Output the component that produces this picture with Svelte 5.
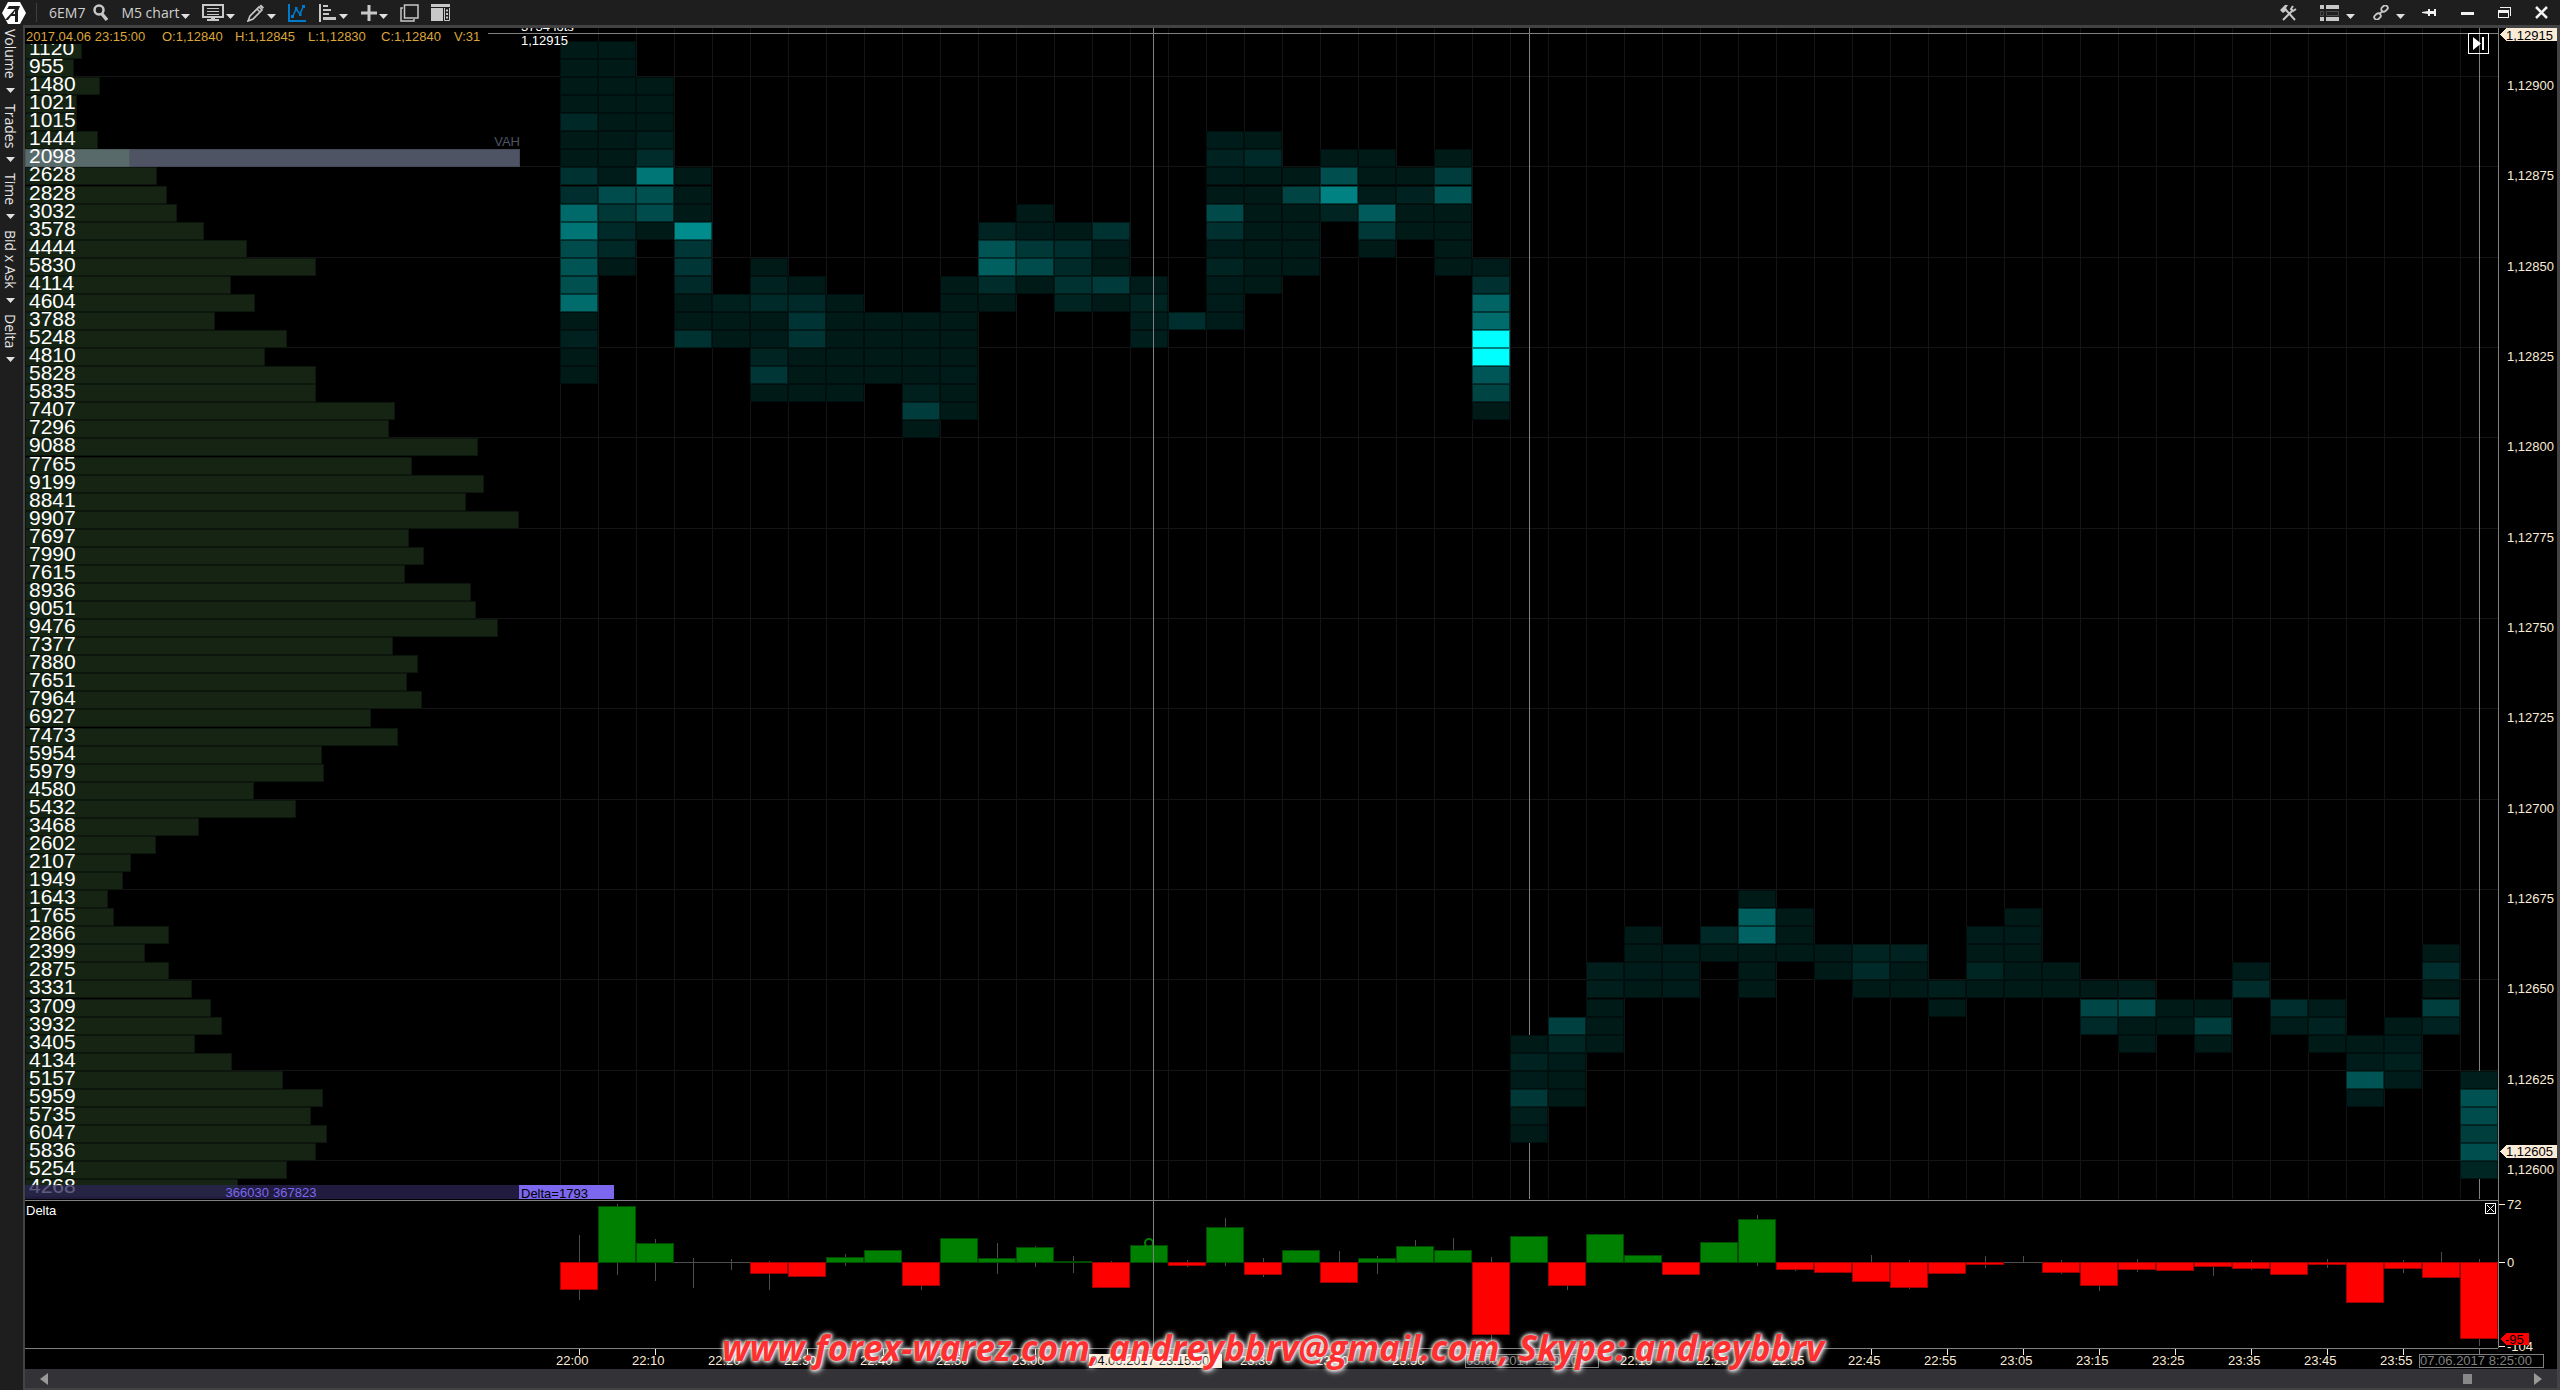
<script>
  let width = $state(0);
  let height = $state(0);
  let scroll = $state(976);

  const COL = 38;
  const TICK = 18.067;
  const TOP_PRICE = 12910;
  const DELTA_SCALE = 0.805;
  const VOL_SCALE = 0.04977;

  const menus = ["Volume", "Trades", "Time", "Bid x Ask", "Delta"];

  const ohlc = [
    { x: 1, text: "2017.04.06 23:15:00" },
    { x: 137, text: "O:1,12840" },
    { x: 210, text: "H:1,12845" },
    { x: 283, text: "L:1,12830" },
    { x: 356, text: "C:1,12840" },
    { x: 429, text: "V:31" },
  ];

  // traded volume per price row, top row first
  const volumes = [
    1120, 955, 1480, 1021, 1015, 1444, 2098, 2628, 2828, 3032, 3578, 4444, 5830, 4114, 4604, 3788,
    5248, 4810, 5828, 5835, 7407, 7296, 9088, 7765, 9199, 8841, 9907, 7697, 7990, 7615, 8936, 9051,
    9476, 7377, 7880, 7651, 7964, 6927, 7473, 5954, 5979, 4580, 5432, 3468, 2602, 2107, 1949, 1643,
    1765, 2866, 2399, 2875, 3331, 3709, 3932, 3405, 4134, 5157, 5959, 5735, 6047, 5836, 5254, 4268,
  ];
  const VAH_ROW = 6;

  // one entry per candle: [first row, intensity of each cluster cell]
  const clusters = [
    [0, [26, 26, 26, 26, 40, 26, 26, 50, 46, 105, 117, 75, 84, 80, 108, 26, 33, 26, 26]],
    [0, [26, 26, 26, 26, 26, 26, 26, 28, 75, 55, 42, 40, 26]],
    [2, [26, 26, 26, 32, 44, 118, 80, 76, 26]],
    [7, [26, 26, 26, 140, 54, 54, 42, 26, 26, 50]],
    [14, [32, 26, 26]],
    [12, [26, 34, 42, 26, 28, 36, 54, 26]],
    [13, [26, 42, 52, 52, 26, 26, 26]],
    [14, [26, 26, 26, 26, 26, 26]],
    [15, [26, 26, 26, 26]],
    [15, [26, 26, 26, 26, 32, 60, 26]],
    [13, [26, 26, 26, 26, 26, 28, 26, 26]],
    [10, [36, 84, 95, 44, 26]],
    [9, [26, 28, 56, 76, 26]],
    [10, [26, 46, 42, 50, 36]],
    [10, [50, 28, 26, 58, 26]],
    [13, [28, 36, 30, 30]],
    [15, [46]],
    [5, [28, 34, 28, 26, 74, 48, 28, 36, 28, 28, 28]],
    [5, [26, 42, 26, 26, 26, 26, 26, 26, 26]],
    [7, [26, 68, 26, 26, 26, 26]],
    [6, [26, 78, 130, 36]],
    [6, [26, 26, 28, 92, 56, 26]],
    [7, [26, 34, 26, 26]],
    [6, [26, 60, 84, 26, 26, 26, 26]],
    [12, [28, 48, 100, 108, 255, 255, 86, 68, 26]],
    [55, [26, 34, 28, 56, 30, 26]],
    [54, [64, 38, 28, 26, 26]],
    [51, [30, 30, 26, 26, 26]],
    [49, [26, 26, 28, 26]],
    [50, [28, 28, 28]],
    [49, [40, 26]],
    [47, [26, 96, 98, 26, 26, 26]],
    [48, [26, 26, 26]],
    [50, [26, 26]],
    [50, [36, 42, 26]],
    [50, [34, 26, 26]],
    [52, [30, 26]],
    [49, [28, 26, 38, 26]],
    [48, [26, 28, 26, 26, 26]],
    [51, [26, 26]],
    [52, [26, 70, 42]],
    [52, [30, 74, 26, 26]],
    [53, [26, 26]],
    [53, [26, 60, 26]],
    [51, [28, 44]],
    [53, [46, 28]],
    [53, [28, 34, 26]],
    [55, [26, 28, 84, 28]],
    [54, [26, 28, 32, 28]],
    [50, [26, 46, 26, 62, 34]],
    [57, [30, 82, 76, 62, 78, 38]],
  ];

  // delta, high, low
  const deltas = [
    [-34, 33, -47], [70, 72, -15], [24, 28, -23], [0, 5, -31], [0, 4, -8], [-14, 1, -34],
    [-18, 0, -18], [6, 10, -4], [15, 15, 0], [-28, 0, -34], [30, 30, 0], [5, 24, -13],
    [19, 20, -5], [1, 7, -13], [-31, 1, -31], [21, 21, 0], [-4, 2, -6], [43, 55, -3],
    [-15, 5, -17], [15, 15, 0], [-25, 14, -25], [5, 7, -14], [20, 27, 0], [15, 30, 0],
    [-89, 6, -97], [32, 32, 0], [-29, 0, -33], [35, 35, 0], [9, 9, 0], [-15, 0, -15],
    [25, 25, 0], [53, 58, -4], [-9, 0, -10], [-12, 0, -12], [-23, 9, -23], [-31, 2, -33],
    [-14, 0, -14], [-3, 8, -6], [0, 8, 0], [-13, 3, -13], [-28, 0, -35], [-9, 4, -11],
    [-10, 0, -10], [-5, 0, -16], [-8, 3, -8], [-15, 0, -15], [-3, 4, -6], [-50, 0, -50],
    [-7, 3, -12], [-19, 12, -19], [-95, 4, -103],
  ];

  const times = [
    [0, "22:00"], [2, "22:10"], [4, "22:20"], [6, "22:30"], [8, "22:40"], [10, "22:50"],
    [12, "23:00"], [18, "23:30"], [20, "23:40"], [22, "23:50"], [28, "22:15"], [30, "22:25"],
    [32, "22:35"], [34, "22:45"], [36, "22:55"], [38, "23:05"], [40, "23:15"], [42, "23:25"],
    [44, "23:35"], [46, "23:45"], [48, "23:55"],
  ];

  const rowY = (r) => Math.round(12 + r * TICK);
  const axisX = $derived(width - 59);
  const axisY = $derived(height - 21);
  const deltaTop = $derived(height - 169);
  const zeroY = $derived(height - 107);
  const colX = $derived((i) => axisX - COL * (clusters.length - i));
  const midX = $derived((i) => colX(i) + 19);
  const crossX = $derived(midX(15) + 4);

  const cyan = (v) => `rgb(0, ${v}, ${v > 40 ? v : v - 2})`;
  const prices = Array.from({ length: 13 }, (_, k) => ({
    row: 2 + k * 5,
    label: "1," + (TOP_PRICE - 10 - k * 25),
  }));
</script>

{#snippet caret()}
  <svg class="caret" width="9" height="5" viewBox="0 0 9 5" aria-hidden="true"><path d="M0 0H9L4.500 5Z" /></svg>
{/snippet}

{#snippet cell(x, y, w, color, edge)}
  <rect {x} {y} width={w} height="18" fill={edge} />
  <rect x={x + 1} y={y + 1} width={Math.max(w - 2, 0)} height="16" fill={color} />
{/snippet}

<div class="app">
  <header class="toolbar">
    <svg class="logo" width="24" height="22" viewBox="0 0 24 22" aria-hidden="true">
      <path fill="#fff" d="M6 0H18L24 11L18 22H6L0 11Z" />
      <path fill="#1e1e1e" d="M7 4H18L16 9V20H13V14H9L6 18H3L13 7H5Z" />
      <path fill="#fff" d="M13 9V12H11Z" />
    </svg>
    <span class="sep"></span>
    <button class="tool symbol" aria-label="Find instrument">
      <span>6EM7</span>
      <svg width="17" height="18" viewBox="0 0 17 18">
        <circle cx="7" cy="6" r="4.500" fill="none" stroke="#c8c8c8" stroke-width="2.500" />
        <path d="M10 10L15 16" stroke="#c8c8c8" stroke-width="3.500" />
      </svg>
    </button>
    <button class="tool">M5 chart{@render caret()}</button>
    <button class="tool" aria-label="Templates">
      <svg width="22" height="17" viewBox="0 0 22 17">
        <path fill="none" stroke="#c8c8c8" stroke-width="2" d="M1 1H21V13H1Z" />
        <path stroke="#c8c8c8" d="M5 4.500H17M5 7.500H17M5 10.500H17" />
        <path fill="#c8c8c8" d="M9 14H13V15H17V17H5V15H9Z" />
      </svg>
      {@render caret()}
    </button>
    <button class="tool" aria-label="Drawing">
      <svg width="18" height="18" viewBox="0 0 18 18">
        <path fill="none" stroke="#c8c8c8" stroke-width="1.600" d="M1 17L3 12L12 3L15 6L6 15ZM10 5L13 8" />
        <path fill="#c8c8c8" d="M12.500 2L14 0.500L17 3.500L15.500 5Z" />
      </svg>
      {@render caret()}
    </button>
    <button class="tool" aria-label="Indicators">
      <svg width="18" height="18" viewBox="0 0 18 18">
        <path fill="none" stroke="#007acc" stroke-width="2" d="M1 0V17H18" />
        <path fill="none" stroke="#007acc" stroke-width="1.500" d="M5 12L8 5L12 10L15 3" />
        <path fill="#007acc" d="M3 11H6V14H3ZM7 3H9.500V6H7ZM11 9H13.500V12H11ZM14 1H17V4H14Z" />
      </svg>
    </button>
    <button class="tool" aria-label="Profile">
      <svg width="19" height="18" viewBox="0 0 19 18">
        <path fill="#c8c8c8" d="M1 0H3V18H1ZM5 1H10V3H5ZM5 5H13V7H5ZM5 9H11V11H5ZM5 13H18V16H5Z" />
      </svg>
      {@render caret()}
    </button>
    <button class="tool" aria-label="Add">
      <svg width="17" height="16" viewBox="0 0 17 16">
        <path stroke="#c8c8c8" stroke-width="3" d="M9 0V16M1 8H17" />
      </svg>
      {@render caret()}
    </button>
    <button class="tool" aria-label="Copy chart">
      <svg width="19" height="18" viewBox="0 0 19 18">
        <path fill="none" stroke="#c8c8c8" stroke-width="1.500" d="M4.500 1H18V14H4.500Z" />
        <path fill="none" stroke="#c8c8c8" stroke-width="1.500" d="M3 4H1V17H14V15" />
      </svg>
    </button>
    <button class="tool" aria-label="Panels">
      <svg width="19" height="17" viewBox="0 0 19 17">
        <path fill="#c8c8c8" d="M0 0H19V3H0ZM0 4H12V17H0Z" />
        <path fill="none" stroke="#c8c8c8" d="M13.500 4V16.500H18.500V4" />
        <path stroke="#c8c8c8" stroke-width="2" d="M15 6.500H17M15 10H17M15 13.500H17" />
      </svg>
    </button>

    <span class="spacer"></span>

    <div class="right-tools">
      <button class="tool" aria-label="Settings">
        <svg width="22" height="16" viewBox="0 0 22 16">
          <path fill="#c8c8c8" d="M0 5L5 0H8L6 3L7 5L3 8Z" />
          <path stroke="#c8c8c8" stroke-width="2" d="M5 4L15 15M3 15L12 6" />
          <path fill="none" stroke="#c8c8c8" stroke-width="2" d="M13 1L11 4L13 6L16 4" />
        </svg>
      </button>
      <button class="tool wide" aria-label="View list">
        <svg width="19" height="16" viewBox="0 0 19 16">
          <path fill="#c8c8c8" d="M0 0H4V4H0ZM6 0H19V4H6ZM0 12H4V16H0ZM6 12H19V16H6Z" />
          <path fill="none" stroke="#4a4a4a" d="M0.500 6.500H3.500V10.500H0.500ZM6.500 6.500H18.500V10.500H6.500Z" />
        </svg>
        {@render caret()}
      </button>
      <button class="tool wide" aria-label="Link chart">
        <svg width="16" height="15" viewBox="0 0 16 15">
          <g fill="none" stroke="#c8c8c8" stroke-width="1.800">
            <rect x="8" y="1" width="7" height="5" rx="2.500" transform="rotate(-42 11.500 3.500)" />
            <rect x="1" y="9" width="7" height="5" rx="2.500" transform="rotate(-42 4.500 11.500)" />
            <path d="M6 9L10 6" />
          </g>
        </svg>
        {@render caret()}
      </button>
    </div>
    <div class="window-tools">
      <button class="tool" aria-label="Pin">
        <svg width="15" height="9" viewBox="0 0 15 9">
          <path fill="#f1f1f1" d="M0 4L6 3V1H8V3H12V1H14V8H12V6H8V8H6V6L0 5Z" />
        </svg>
      </button>
      <button class="tool" aria-label="Minimize">
        <svg width="13" height="5" viewBox="0 0 13 5"><path fill="#f1f1f1" d="M0 2H13V5H0Z" /></svg>
      </button>
      <button class="tool" aria-label="Restore">
        <svg width="13" height="11" viewBox="0 0 13 11">
          <path fill="#f1f1f1" d="M2 0H13V9H12V1H2ZM0 3H11V11H0ZM1 6V10H10V6Z" fill-rule="evenodd" />
        </svg>
      </button>
      <button class="tool" aria-label="Close">
        <svg width="13" height="13" viewBox="0 0 13 13">
          <path stroke="#f1f1f1" stroke-width="2.500" d="M1 1L12 12M12 1L1 12" />
        </svg>
      </button>
    </div>
  </header>

  <div class="body">
    <nav class="sidebar">
      {#each menus as menu}
        <button class="side-menu"><span>{menu}</span>{@render caret()}</button>
      {/each}
    </nav>

    <main class="frame">
      <div class="plot" bind:clientWidth={width} bind:clientHeight={height}>
        <svg class="canvas" {width} {height}>
          <defs>
            <clipPath id="price-pane"><rect width={width} height={Math.max(deltaTop - 1, 0)} /></clipPath>
          </defs>

          <g clip-path="url(#price-pane)">
            {#each prices as p}
              <rect class="grid" x="0" y={rowY(p.row)} width={Math.max(axisX, 0)} height="1" />
            {/each}
            {#each clusters as _, i}
              <rect class="grid" x={colX(i)} y="0" width="1" height={Math.max(deltaTop - 1, 0)} />
            {/each}
            <rect class="line" x={midX(25)} y="0" width="1" height={Math.max(deltaTop - 1, 0)} />
            <rect class="line" x={midX(50)} y="0" width="1" height={Math.max(deltaTop - 1, 0)} />

            {#each volumes as v, r}
              {#if r === VAH_ROW}
                {@render cell(0, rowY(r) + 1, 495, "#4f5465", "#444857")}
                {@render cell(0, rowY(r) + 1, 105, "#596a6b", "#4d5b5c")}
              {:else}
                {@render cell(0, rowY(r) + 1, Math.round(v * VOL_SCALE) + 1, "#162414", "#0d160c")}
              {/if}
              <text class="volume" x="4" y={rowY(r) + 15}>{v}</text>
            {/each}
            <text class="label vah" x={495} y="118" text-anchor="end">VAH</text>

            {#each clusters as [first, cells], i}
              {#each cells as v, k}
                {@render cell(colX(i), rowY(first + k) + 1, COL, cyan(v), cyan(Math.round(v / 2) + 2))}
              {/each}
            {/each}

            <rect x="0" y={deltaTop - 15} width="494" height="14" fill="#2c2455" opacity="0.75" />
            <rect x="494" y={deltaTop - 15} width="95" height="14" fill="#7b68ee" />
            <text class="label total" x="244" y={deltaTop - 3} text-anchor="end">366030</text>
            <text class="label total" x="248" y={deltaTop - 3}>367823</text>
            <text class="label" x="496" y={deltaTop - 2}>Delta=1793</text>
          </g>

          <rect class="line" x="0" y="5" width={Math.max(axisX, 0)} height="1" />
          <rect x="0" y="0" width="463" height="16" />
          {#each ohlc as item}
            <text class="label ohlc" x={item.x} y="13">{item.text}</text>
          {/each}
          <text class="label white" x="496" y="3">3734 lots</text>
          <text class="label white" x="496" y="17">1,12915</text>

          <rect class="line" x="0" y={deltaTop} width={Math.max(axisX, 0)} height="1" />
          <text class="label white" x="1" y={deltaTop + 15}>Delta</text>
          {#each deltas as [v, hi, lo], i}
            {@const h = Math.round(Math.abs(v) * DELTA_SCALE)}
            <rect
              class="wick"
              x={midX(i)}
              y={zeroY - Math.round(hi * DELTA_SCALE)}
              width="1"
              height={Math.round((hi - lo) * DELTA_SCALE) + 1}
            />
            {#if v === 0}
              <rect class="wick" x={colX(i)} y={zeroY} width={COL} height="1" />
            {:else}
              {@const y = v > 0 ? zeroY - h : zeroY}
              <rect x={colX(i)} {y} width={COL} height={h + 1} fill={v > 0 ? "#004a00" : "#a00000"} />
              <rect x={colX(i) + 1} y={y + 1} width={COL - 2} height={Math.max(h - 1, 0)} fill={v > 0 ? "#008000" : "#ff0000"} />
            {/if}
          {/each}
          <circle class="marker" cx={midX(15)} cy={zeroY - 19} r="4" />
          <rect class="line" x={crossX} y="0" width="1" height={Math.max(axisY, 0)} />

          <rect class="line" x={axisX} y="0" width="1" height={Math.max(axisY, 0)} />
          <rect class="line" x="0" y={axisY} width={Math.max(axisX, 0)} height="1" />

          {#each prices as p}
            <text class="label cream" x={axisX + 9} y={rowY(p.row) + 14}>{p.label}</text>
          {/each}
          <path class="tag" d="M{axisX + 2} 6l6 -6H{width}V13H{axisX + 8}Z" />
          <text class="label" x={axisX + 8} y="12">1,12915</text>
          <path class="tag" d="M{axisX + 2} {rowY(61) + 9}l6 -6H{width}v13H{axisX + 8}Z" />
          <text class="label" x={axisX + 8} y={rowY(61) + 14}>1,12605</text>

          {#each [[72, "72"], [0, "0"], [-104, "-104"]] as [v, text]}
            <rect class="tag" x={axisX + 1} y={zeroY - Math.round(v * DELTA_SCALE)} width="6" height="1" />
            <text class="label cream" x={axisX + 9} y={zeroY + 5 - Math.round(v * DELTA_SCALE)}>{text}</text>
          {/each}
          <path fill="#ff0000" d="M{axisX + 2} {zeroY + 77}l6 -6H{axisX + 31}v12H{axisX + 8}Z" />
          <text class="label" x={axisX + 7} y={zeroY + 82}>-95</text>

          {#each times as [i, text]}
            <rect class="tag" x={midX(i)} y={axisY + 1} width="1" height="6" />
            <text class="label cream" x={midX(i) - 23} y={axisY + 17}>{text}</text>
          {/each}
          <rect class="tag" x={crossX - 64} y={axisY + 6} width="133" height="14" />
          <text class="label" x={crossX - 63} y={axisY + 17}>04.06.2017 23:15:00</text>
          <rect class="line" x={midX(25)} y={axisY + 1} width="1" height="5" />
          <rect class="outline" x={midX(25) - 64} y={axisY + 6} width="133" height="13" />
          <text class="label grey" x={midX(25) - 63} y={axisY + 17}>05.06.2017 22:00:00</text>
          <rect class="line" x={midX(50)} y={axisY + 1} width="1" height="5" />
          <rect class="outline" x={midX(50) - 60} y={axisY + 6} width="124" height="13" />
          <text class="label grey" x={midX(50) - 59} y={axisY + 17}>07.06.2017 8:25:00</text>
        </svg>

        <button class="to-end" aria-label="Scroll to last bar">
          <svg width="12" height="13" viewBox="0 0 12 13"><path fill="#fff" d="M0 0L8 6.500L0 13ZM9 0H11V13H9Z" /></svg>
        </button>
        <button class="close-pane" aria-label="Close Delta panel">
          <svg width="9" height="9" viewBox="0 0 9 9"><path stroke="#fff" d="M1 1L8 8M8 1L1 8" /></svg>
        </button>
      </div>

      <div class="scrollbar">
        <button aria-label="Scroll left"><svg width="8" height="12" viewBox="0 0 8 12"><path d="M8 0V12L0 6Z" /></svg></button>
        <input type="range" min="0" max="1000" bind:value={scroll} aria-label="Chart position" />
        <button aria-label="Scroll right"><svg width="8" height="12" viewBox="0 0 8 12"><path d="M0 0V12L8 6Z" /></svg></button>
      </div>
    </main>
  </div>

  <p class="watermark">www.forex-warez.com, andreybbrv@gmail.com, Skype: andreybbrv</p>
</div>

<style>
  :global(body) {
    margin: 0;
    background: #1e1e1e;
  }
  .app {
    position: relative;
    display: flex;
    flex-direction: column;
    height: 100vh;
    overflow: hidden;
    background: #1e1e1e;
    color: #d0d0d0;
    font: 14px/16px "Open Sans", "Noto Sans", sans-serif;
  }
  button {
    margin: 0;
    padding: 0;
    border: 0;
    background: none;
    color: inherit;
    font: inherit;
  }
  svg { display: block; flex: none; }

  .toolbar {
    display: flex;
    align-items: center;
    gap: 12px;
    height: 25px;
    padding: 0 12px 0 2px;
  }
  .sep {
    width: 1px;
    height: 19px;
    margin-left: -2px;
    background: #3f3f42;
  }
  .tool {
    display: flex;
    align-items: center;
    gap: 2px;
    height: 25px;
    white-space: nowrap;
  }
  .symbol { gap: 7px; }
  .wide { gap: 7px; }
  .caret {
    fill: #e0e0e0;
    margin-top: 7px;
  }
  .spacer { flex: 1; }
  .right-tools { display: flex; gap: 18px; }
  .window-tools {
    display: flex;
    gap: 24px;
    margin-left: 5px;
  }

  .body {
    flex: 1;
    display: flex;
    min-height: 0;
  }
  .sidebar {
    display: flex;
    flex-direction: column;
    gap: 11px;
    width: 23px;
    padding-top: 4px;
  }
  .side-menu {
    display: flex;
    flex-direction: column;
    align-items: center;
    gap: 9px;
    width: 20px;
    color: #e6e6e6;
  }
  .side-menu span { writing-mode: vertical-rl; }
  .side-menu .caret { margin: 0; }

  .frame {
    flex: 1;
    display: flex;
    flex-direction: column;
    min-width: 0;
    border: solid #434346;
    border-width: 3px 3px 2px 2px;
    background: #000;
  }
  .plot {
    position: relative;
    flex: 1;
    min-height: 0;
    overflow: hidden;
  }
  .canvas {
    position: absolute;
    inset: 0;
    shape-rendering: crispEdges;
  }
  .grid { fill: #141414; }
  .line { fill: #808080; }
  .wick { fill: #4c4c4c; }
  .tag { fill: #faebd7; }
  .outline { fill: none; stroke: #808080; }
  .marker { fill: none; stroke: #008000; stroke-width: 2; shape-rendering: auto; }
  .label { font: 13px "Liberation Sans", Arial, sans-serif; fill: #000; }
  .volume { font: 21px "Liberation Sans", Arial, sans-serif; fill: #fff; }
  .white { fill: #fff; }
  .cream { fill: #faebd7; }
  .grey { fill: #808080; }
  .ohlc { fill: #dca53c; }
  .vah { fill: #4f5465; }
  .total { fill: #7b68ee; }

  .to-end {
    position: absolute;
    top: 5px;
    right: 68px;
    display: grid;
    place-items: center;
    width: 21px;
    height: 21px;
    border: 1px solid #fff;
  }
  .close-pane {
    position: absolute;
    right: 61px;
    bottom: 155px;
    border: 1px solid #fff;
  }

  .scrollbar {
    display: flex;
    align-items: center;
    gap: 3px;
    height: 19px;
    padding: 0 15px;
    background: #333337;
  }
  .scrollbar path { fill: #999; }
  .scrollbar input {
    flex: 1;
    appearance: none;
    height: 10px;
    margin: 0;
    background: none;
  }
  .scrollbar input::-webkit-slider-thumb {
    appearance: none;
    width: 9px;
    height: 10px;
    background: #888;
  }

  .watermark {
    position: absolute;
    bottom: 22px;
    left: 0;
    right: 14px;
    margin: 0;
    color: #ff3030;
    font: italic bold 35px/40px "Open Sans", sans-serif;
    text-align: center;
    text-shadow: 0 0 3px #fff, 0 0 5px #fff, 1px 1px 6px #fff;
    pointer-events: none;
  }
</style>
